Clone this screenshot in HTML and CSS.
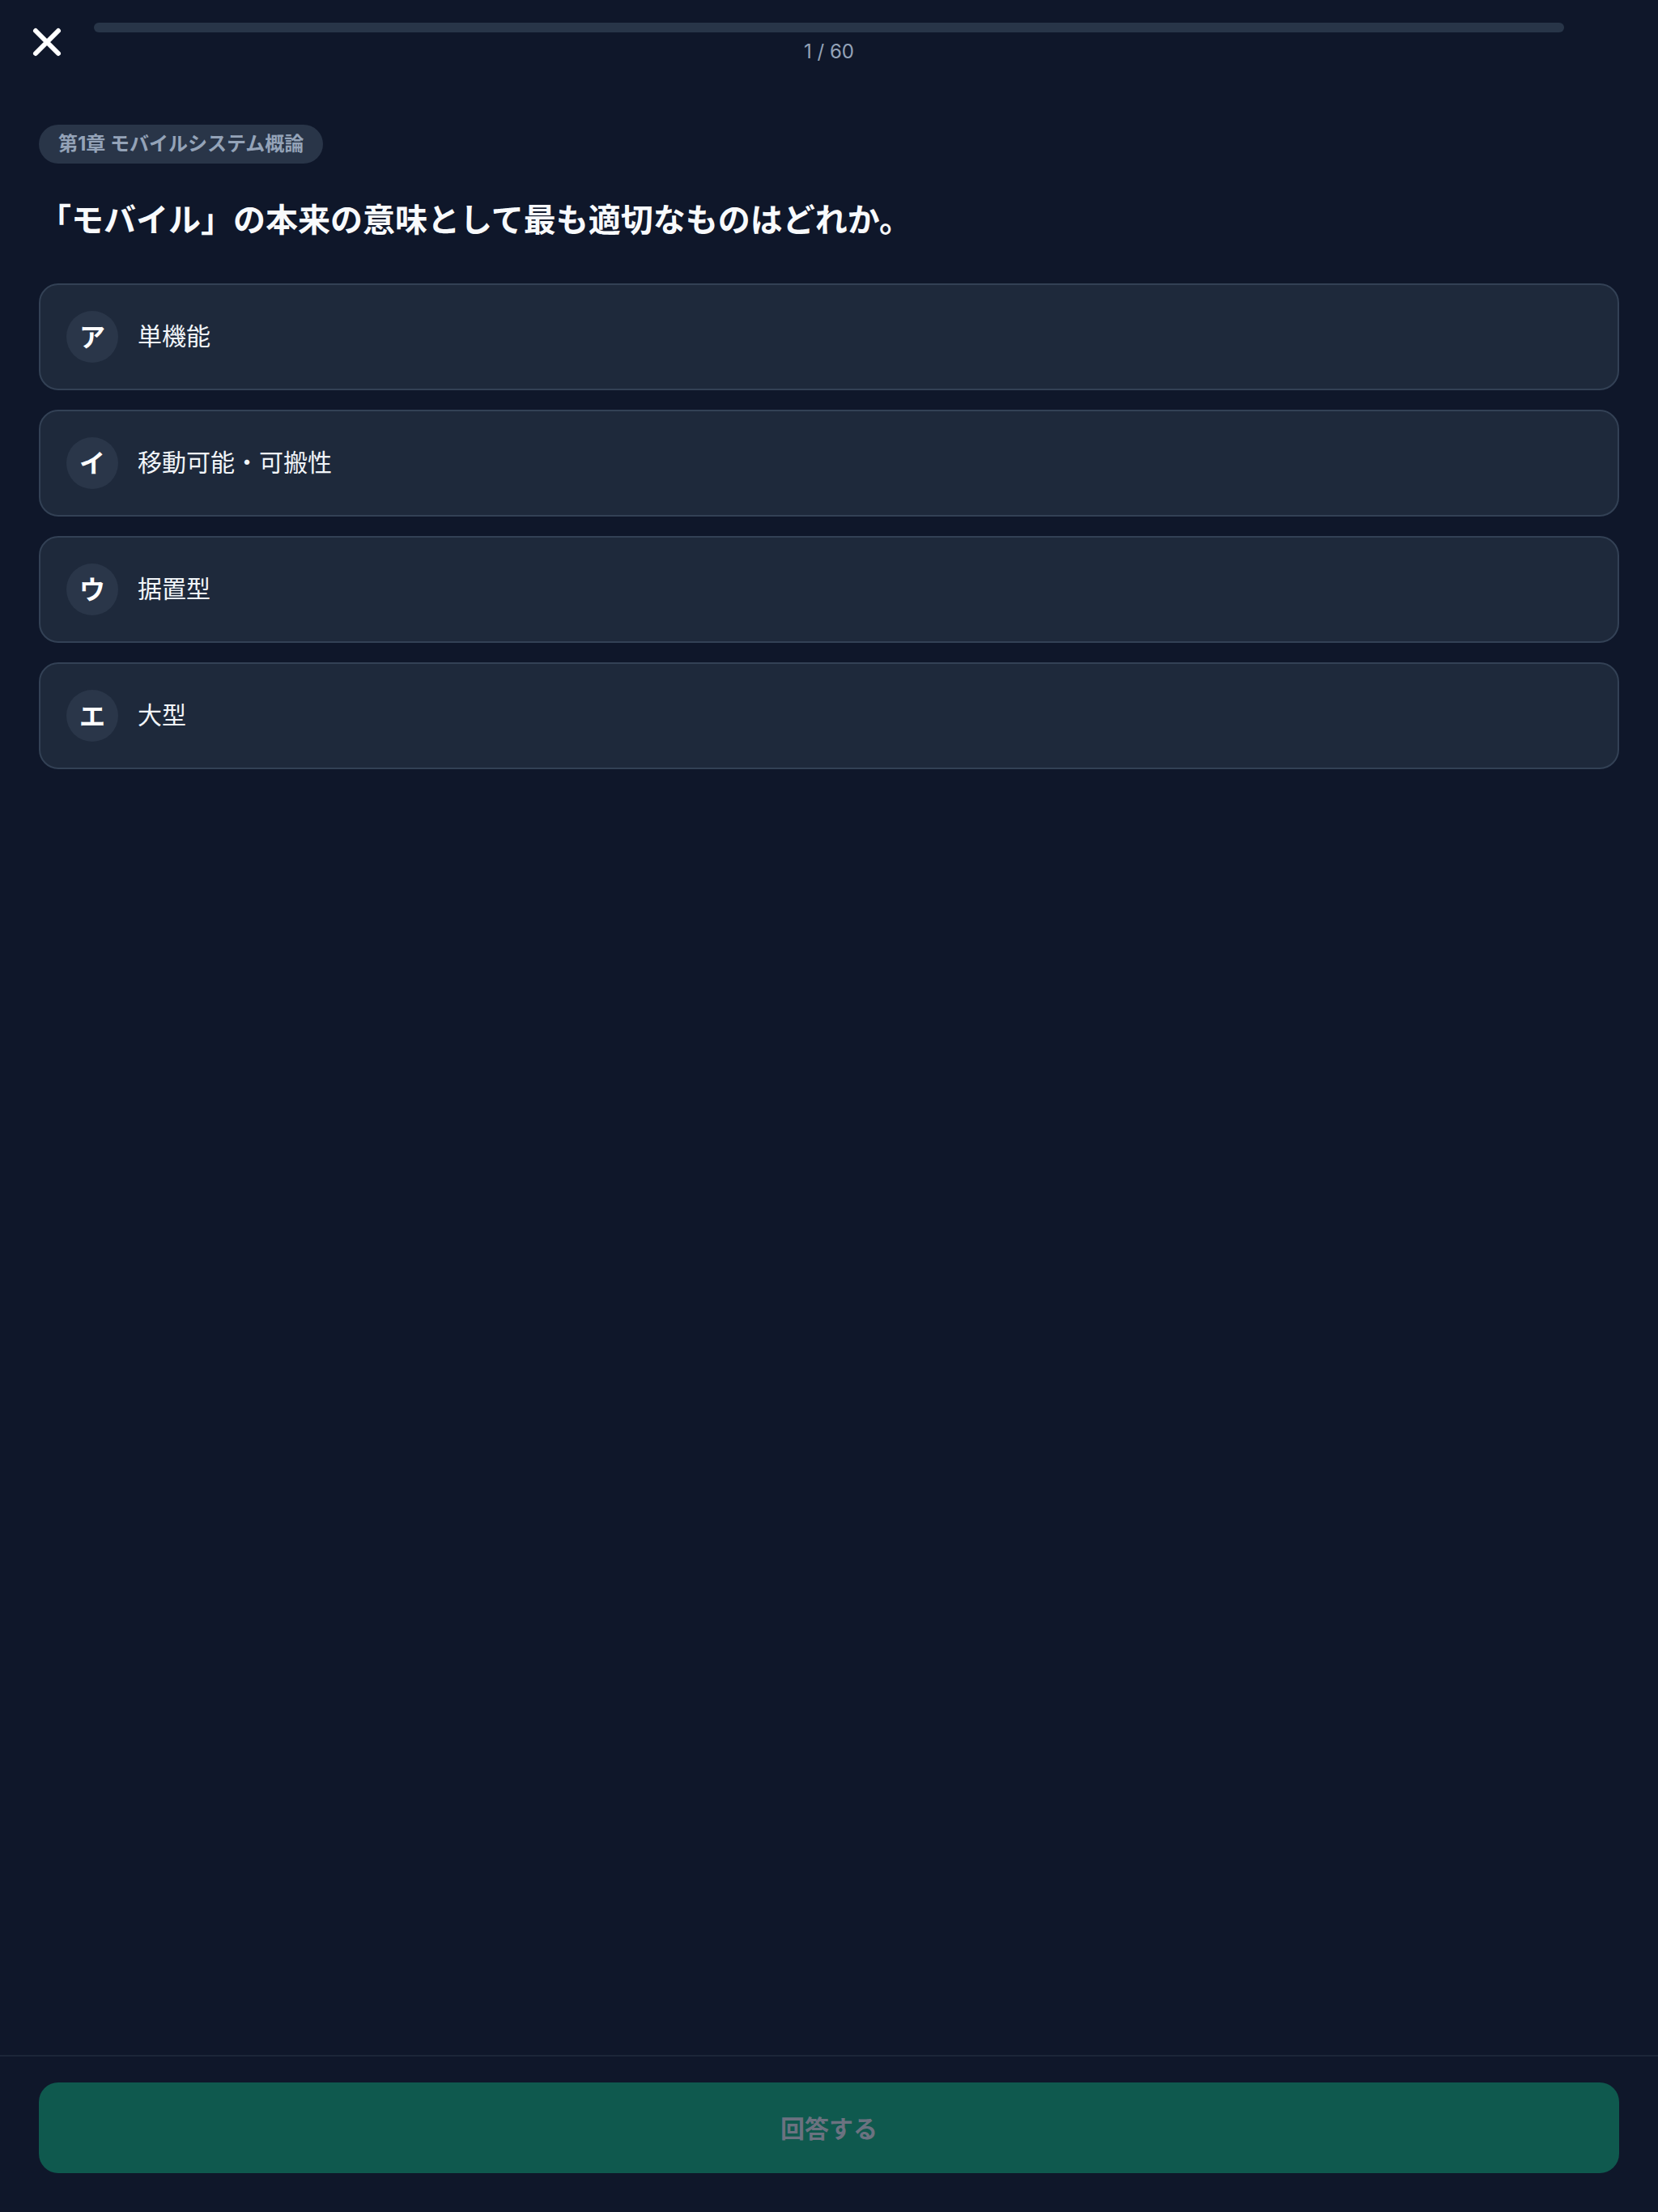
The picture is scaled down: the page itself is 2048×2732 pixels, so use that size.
FILE: index.html
```html
<!DOCTYPE html>
<html lang="ja">
<head>
<meta charset="utf-8">
<title>クイズ</title>
<link rel="stylesheet" href="styles.css">
</head>
<body>
<div class="app">
  <header class="topbar">
    <button class="close-btn" aria-label="閉じる">
      <svg viewBox="0 0 24 24" width="48" height="48" fill="none" stroke="#ffffff" stroke-width="3" stroke-linecap="round"><path d="M5 5L19 19M19 5L5 19"/></svg>
    </button>
    <div class="progress">
      <div class="progress-track"><div class="progress-fill"></div></div>
      <div class="progress-label">1 / 60</div>
    </div>
    <div class="spacer"></div>
  </header>

  <main class="content">
    <span class="chapter">第1章 モバイルシステム概論</span>
    <h1 class="question">「モバイル」の本来の意味として最も適切なものはどれか。</h1>
    <div class="options">
      <div class="option"><span class="mark">ア</span><span class="label">単機能</span></div>
      <div class="option"><span class="mark">イ</span><span class="label">移動可能・可搬性</span></div>
      <div class="option"><span class="mark">ウ</span><span class="label">据置型</span></div>
      <div class="option"><span class="mark">エ</span><span class="label">大型</span></div>
    </div>
  </main>

  <footer class="footer">
    <button class="answer-btn" disabled>回答する</button>
  </footer>
</div>
</body>
</html>
```
FILE: styles.css
```css
* { box-sizing: border-box; }
html, body {
  margin: 0;
  padding: 0;
  background: #0f172a;
}
body {
  font-family: "Inter", "Noto Sans CJK JP", sans-serif;
  color: #f8fafc;
}
.app {
  display: flex;
  flex-direction: column;
  min-height: 100vh;
}
.topbar {
  display: flex;
  align-items: flex-start;
  gap: 34px;
  padding: 28px 34px 0;
}
.close-btn {
  width: 48px;
  height: 48px;
  padding: 0;
  border: 0;
  background: transparent;
  display: flex;
  align-items: center;
  justify-content: center;
  flex: none;
}
.close-btn svg { display: block; }
.spacer { width: 48px; flex: none; }
.progress {
  flex: 1;
  display: flex;
  flex-direction: column;
  align-items: center;
}
.progress-track {
  width: 100%;
  height: 12px;
  border-radius: 6px;
  background: #283548;
  overflow: hidden;
}
.progress-fill {
  width: 0;
  height: 100%;
  background: #10b981;
}
.progress-label {
  margin-top: 8px;
  font-family: "Inter", sans-serif;
  font-size: 24px;
  line-height: 32px;
  color: #94a3b8;
}
.content {
  flex: 1;
  padding: 74px 48px 0;
  display: flex;
  flex-direction: column;
  align-items: flex-start;
}
.chapter {
  display: inline-flex;
  align-items: center;
  height: 48px;
  padding: 0 24px;
  border-radius: 24px;
  background: #293548;
  color: #94a3b8;
  font-family: "Inter", "Noto Sans CJK JP", sans-serif;
  font-weight: 700;
  font-size: 24px;
  line-height: 48px;
}
.question {
  margin: 37px 0 0;
  font-family: "Noto Sans CJK JP", sans-serif;
  font-weight: 700;
  font-size: 40px;
  line-height: 60px;
  color: #f8fafc;
}
.options {
  align-self: stretch;
  margin-top: 51px;
  display: flex;
  flex-direction: column;
  gap: 24px;
}
.option {
  display: flex;
  align-items: center;
  gap: 24px;
  padding: 32px;
  border: 2px solid #334155;
  border-radius: 24px;
  background: #1e293b;
}
.mark {
  width: 64px;
  height: 64px;
  flex: none;
  border-radius: 50%;
  background: #2a3649;
  display: flex;
  align-items: center;
  justify-content: center;
  font-family: "Noto Sans CJK JP", sans-serif;
  font-weight: 700;
  font-size: 32px;
  line-height: 1;
  padding-bottom: 4px;
  color: #ffffff;
}
.label {
  font-family: "Noto Sans CJK JP", sans-serif;
  font-size: 30px;
  line-height: 44px;
  padding-bottom: 6px;
  color: #f1f5f9;
}
.footer {
  border-top: 2px solid #1c2638;
  padding: 32px 48px 48px;
}
.answer-btn {
  width: 100%;
  height: 112px;
  border: 0;
  border-radius: 24px;
  background: #0f594e;
  color: #6b7280;
  font-family: "Noto Sans CJK JP", sans-serif;
  font-weight: 700;
  font-size: 30px;
  padding-bottom: 4px;
  display: flex;
  align-items: center;
  justify-content: center;
}
```
